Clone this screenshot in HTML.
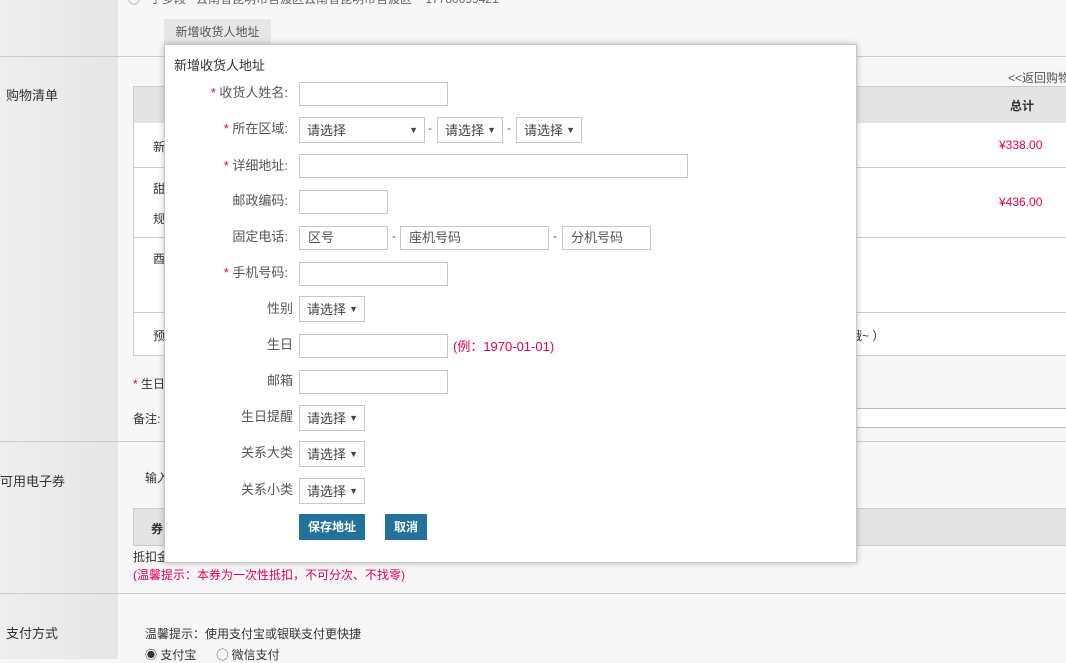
<!DOCTYPE html>
<html><head><meta charset="utf-8"><style>
*{margin:0;padding:0;box-sizing:border-box}
body{width:1066px;height:659px;overflow:hidden;position:relative;background:#f7f7f7;font-family:"Liberation Sans","Noto Sans CJK SC",sans-serif;font-size:12px;color:#333}
.a{position:absolute;white-space:nowrap}
.left{background:linear-gradient(90deg,#eeeeee,#e6e6e6)}
.hl{position:absolute;left:0;width:1066px;height:1px;background:#ccc}
.inp{position:absolute;height:24px;border:1px solid #c8c8c8;background:#fff;color:#555;padding-left:8px;line-height:22px;font-size:13px}
.sel{position:absolute;height:26px;border:1px solid #c8c8c8;background:#fff;color:#444;padding-left:7px;line-height:25px;font-size:13px}
.sel:after{content:"▼";position:absolute;right:6px;top:0;font-size:9px;color:#444}
.lab{position:absolute;width:130px;left:158px;text-align:right;color:#555;font-size:13px;margin-top:-3px}
.lab b{color:#e4004f;font-weight:normal}
.dash{position:absolute;color:#555}
.btn{position:absolute;background:#23729c;color:#fff;font-size:12px;text-align:center;line-height:26px;height:26px;font-weight:bold}
.red{color:#e4004f}
</style></head><body>
<div class="a left" style="left:0;top:0;width:118px;height:56px"></div>
<div class="a left" style="left:0;top:57px;width:118px;height:384px"></div>
<div class="a left" style="left:0;top:442px;width:118px;height:151px"></div>
<div class="a left" style="left:0;top:594px;width:118px;height:65px"></div>
<div class="hl" style="top:56px"></div>
<div class="hl" style="top:441px"></div>
<div class="hl" style="top:593px"></div>
<div class="a" style="left:128px;top:-10px;color:#666;font-size:12px">◯ &nbsp; 手多段 &nbsp; 云南省昆明市官渡区云南省昆明市官渡区 &nbsp; &nbsp;17780099421</div>
<div class="a" style="left:164px;top:19px;width:107px;height:26px;background:#e6e6e6;color:#555;line-height:26px;text-align:center;font-size:12px">新增收货人地址</div>
<div class="a" style="left:6px;top:85px;font-size:13px">购物清单</div>
<div class="a" style="left:0;top:471px;font-size:13px">可用电子券</div>
<div class="a" style="left:6px;top:623px;font-size:13px">支付方式</div>
<div class="a" style="left:1008px;top:69px;color:#555;font-size:12px">&lt;&lt;返回购物车</div>
<div class="a" style="left:133px;top:86px;width:940px;height:270px;background:#fff;border:1px solid #ccc"></div>
<div class="a" style="left:134px;top:87px;width:940px;height:36px;background:#e5e4e4"></div>
<div class="a" style="left:1010px;top:97px;font-weight:bold;font-size:12px">总计</div>
<div class="a" style="left:134px;top:167px;width:940px;height:1px;background:#ccc"></div>
<div class="a" style="left:134px;top:237px;width:940px;height:1px;background:#ccc"></div>
<div class="a" style="left:134px;top:312px;width:940px;height:1px;background:#ccc"></div>
<div class="a red" style="left:999px;top:138px">¥338.00</div>
<div class="a red" style="left:999px;top:195px">¥436.00</div>
<div class="a" style="left:153px;top:138px">新</div>
<div class="a" style="left:153px;top:180px">甜</div>
<div class="a" style="left:153px;top:210px">规</div>
<div class="a" style="left:153px;top:250px">酉</div>
<div class="a" style="left:153px;top:327px">预</div>
<div class="a" style="left:850px;top:327px">哦~ ）</div>
<div class="a" style="left:133px;top:375px"><span class="red">*</span> 生日</div>
<div class="a" style="left:133px;top:410px">备注:</div>
<div class="a" style="left:850px;top:408px;width:220px;height:20px;border:1px solid #bbb;background:#fff"></div>
<div class="a" style="left:145px;top:469px">输入</div>
<div class="a" style="left:133px;top:508px;width:940px;height:38px;background:#e5e4e4;border:1px solid #ccc"></div>
<div class="a" style="left:151px;top:520px;font-weight:bold">券</div>
<div class="a" style="left:133px;top:548px">抵扣金</div>
<div class="a red" style="left:133px;top:566px">(温馨提示：本券为一次性抵扣，不可分次、不找零)</div>
<div class="a" style="left:145px;top:625px">温馨提示：使用支付宝或银联支付更快捷</div>
<div class="a" style="left:145px;top:646px">◉ 支付宝 &nbsp; &nbsp; &nbsp;◯ 微信支付</div>

<div class="a" style="left:164px;top:44px;width:693px;height:519px;background:#fff;border:1px solid #c8c8c8;box-shadow:0 0 6px rgba(0,0,0,.25)"></div>
<div class="a" style="left:174px;top:55px;font-size:13px">新增收货人地址</div>

<div class="lab" style="top:85px"><b>*</b> 收货人姓名:</div>
<div class="inp" style="left:299px;top:82px;width:149px"></div>
<div class="lab" style="top:121px"><b>*</b> 所在区域:</div>
<div class="sel" style="left:299px;top:117px;width:126px">请选择</div>
<div class="dash" style="left:428px;top:121px">-</div>
<div class="sel" style="left:437px;top:117px;width:66px">请选择</div>
<div class="dash" style="left:507px;top:121px">-</div>
<div class="sel" style="left:516px;top:117px;width:66px">请选择</div>
<div class="lab" style="top:158px"><b>*</b> 详细地址:</div>
<div class="inp" style="left:299px;top:154px;width:389px"></div>
<div class="lab" style="top:193px">邮政编码:</div>
<div class="inp" style="left:299px;top:190px;width:89px"></div>
<div class="lab" style="top:229px">固定电话:</div>
<div class="inp" style="left:299px;top:226px;width:89px">区号</div>
<div class="dash" style="left:392px;top:229px">-</div>
<div class="inp" style="left:400px;top:226px;width:149px">座机号码</div>
<div class="dash" style="left:553px;top:229px">-</div>
<div class="inp" style="left:562px;top:226px;width:89px">分机号码</div>
<div class="lab" style="top:265px"><b>*</b> 手机号码:</div>
<div class="inp" style="left:299px;top:262px;width:149px"></div>
<div class="lab" style="top:301px;width:135px">性别</div>
<div class="sel" style="left:299px;top:296px;width:66px">请选择</div>
<div class="lab" style="top:337px;width:135px">生日</div>
<div class="inp" style="left:299px;top:334px;width:149px"></div>
<div class="a red" style="left:453px;top:336px;font-size:13px">(例：1970-01-01)</div>
<div class="lab" style="top:373px;width:135px">邮箱</div>
<div class="inp" style="left:299px;top:370px;width:149px"></div>
<div class="lab" style="top:409px;width:135px">生日提醒</div>
<div class="sel" style="left:299px;top:405px;width:66px">请选择</div>
<div class="lab" style="top:445px;width:135px">关系大类</div>
<div class="sel" style="left:299px;top:441px;width:66px">请选择</div>
<div class="lab" style="top:482px;width:135px">关系小类</div>
<div class="sel" style="left:299px;top:478px;width:66px">请选择</div>
<div class="btn" style="left:299px;top:514px;width:66px">保存地址</div>
<div class="btn" style="left:385px;top:514px;width:42px">取消</div>
</body></html>
